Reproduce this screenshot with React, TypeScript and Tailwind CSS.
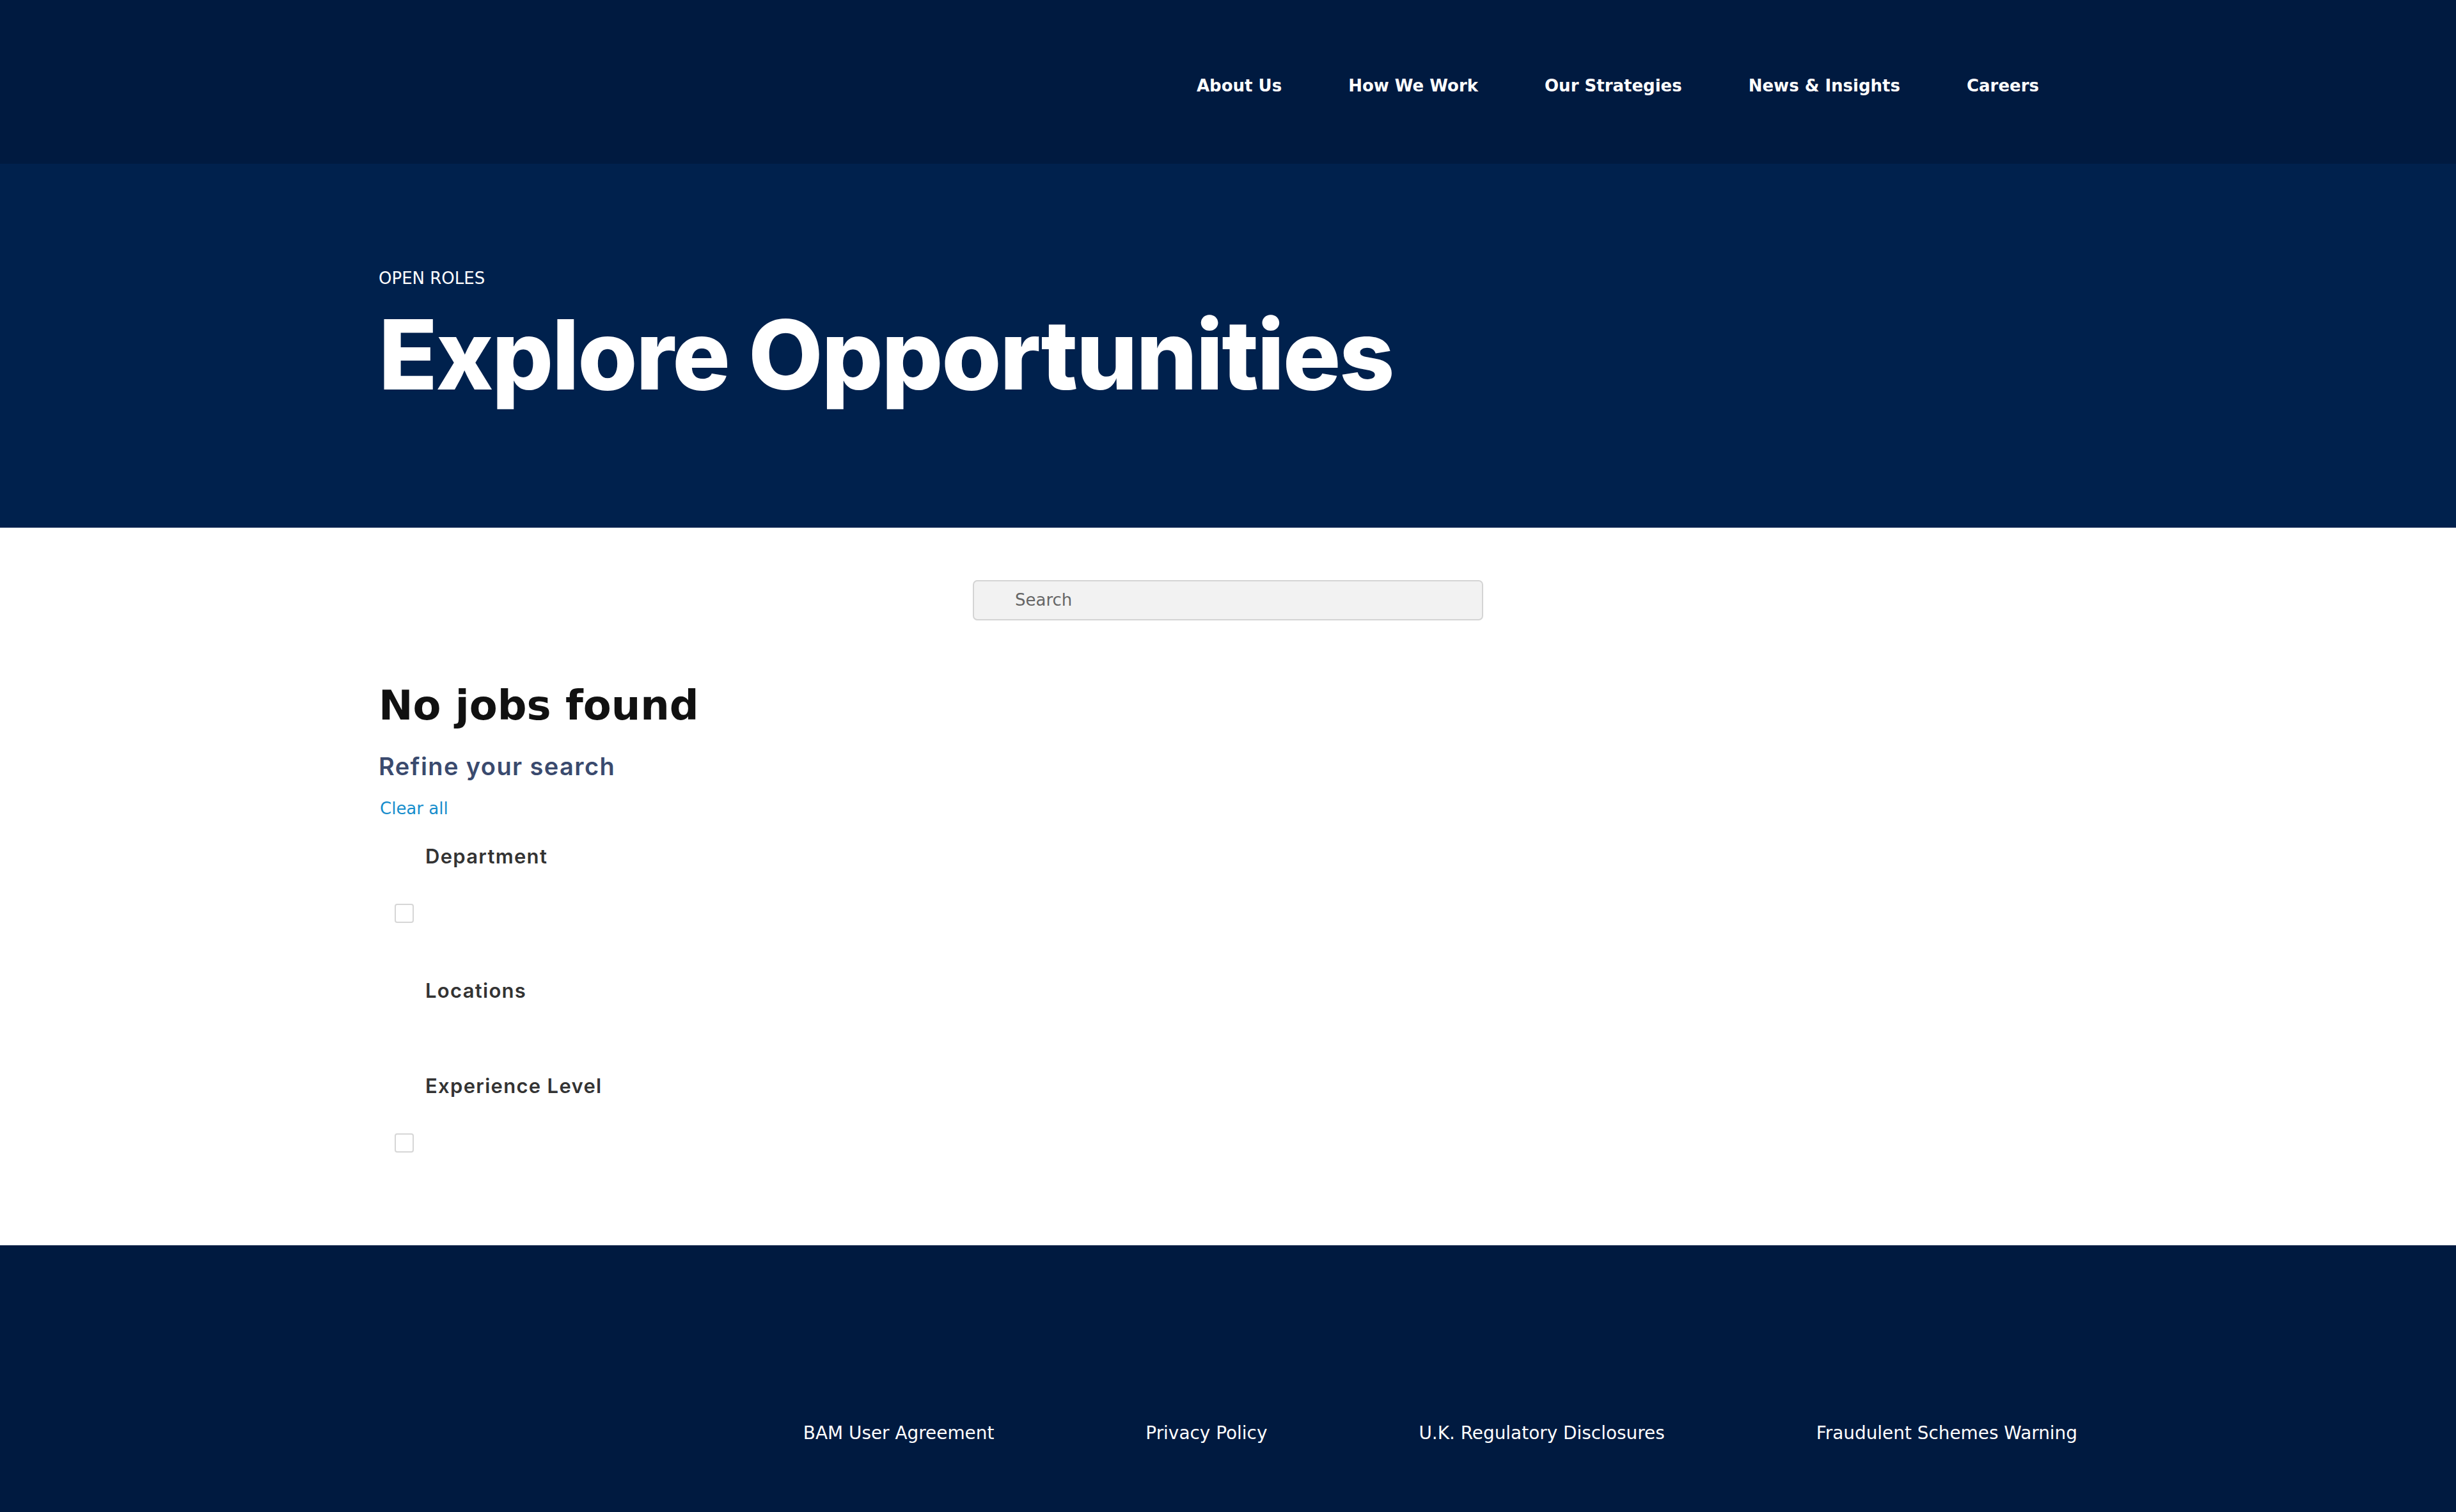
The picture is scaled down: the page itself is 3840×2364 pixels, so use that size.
const navItems = ["About Us", "How We Work", "Our Strategies", "News & Insights", "Careers"];
const footerLinks = ["BAM User Agreement", "Privacy Policy", "U.K. Regulatory Disclosures", "Fraudulent Schemes Warning"];

function Checkbox() {
  return <span className="block w-[30px] h-[30px] rounded-[4px] border-2 border-[#d6d6d6] bg-white" />;
}

export default function App() {
  return (
    <div className="min-h-screen bg-white font-['DejaVu_Sans',sans-serif]">
      {/* Top bar */}
      <header className="h-[256px] bg-[#001a40]">
        <div className="mx-[592px] pt-[115px] flex justify-end pr-[60px]">
          <nav className="flex gap-[104px] text-[26px] leading-[39px] font-bold text-white">
            {navItems.map((n) => (
              <a key={n} href="#">{n}</a>
            ))}
          </nav>
        </div>
      </header>

      {/* Hero */}
      <section className="h-[569px] bg-[#00214d]">
        <div className="mx-[592px] pt-[160px]">
          <p className="text-[26px] leading-[39px] text-white">OPEN ROLES</p>
          <h1 className="mt-[24px] font-['Inter',sans-serif] font-extrabold text-[151px] leading-none tracking-[-2.4px] text-white">
            Explore Opportunities
          </h1>
        </div>
      </section>

      {/* Jobs */}
      <main className="h-[1122px] bg-white">
        <div className="mx-[592px] pt-[82px]">
          <div className="flex justify-center">
            <div className="w-[798px] h-[63px] rounded-[7px] border-2 border-[#d4d4d4] bg-[#f2f2f2] flex items-center pl-[64px] text-[26px] text-[#666]">
              Search
            </div>
          </div>

          <h2 className="mt-[95px] text-[64px] leading-[1.2] font-bold text-[#111]">No jobs found</h2>
          <h3 className="mt-[34px] font-['Inter',sans-serif] font-semibold text-[38px] leading-[1.2] tracking-[1.4px] text-[#3a4a6e]">
            Refine your search
          </h3>
          <a href="#" className="block mt-[24px] text-[26px] leading-[1.5] text-[#168dcc] pl-[2px]">Clear all</a>

          <div className="mt-[36px] font-['Inter',sans-serif] font-semibold text-[31px] leading-[1.2] tracking-[1.3px] text-[#333]">
            <div className="pl-[73px]">Department</div>
            <div className="mt-[55px] pl-[25px]"><Checkbox /></div>
            <div className="mt-[87px] pl-[73px]">Locations</div>
            <div className="mt-[112px] pl-[73px]">Experience Level</div>
            <div className="mt-[56px] pl-[25px]"><Checkbox /></div>
          </div>
        </div>
      </main>

      {/* Footer */}
      <footer className="bg-[#001a40] pt-[273px] pb-[102px]">
        <div className="mx-[592px] flex justify-end gap-[237px] text-[27.9px] leading-[42px] text-white">
          {footerLinks.map((l) => (
            <a key={l} href="#">{l}</a>
          ))}
        </div>
      </footer>
    </div>
  );
}
